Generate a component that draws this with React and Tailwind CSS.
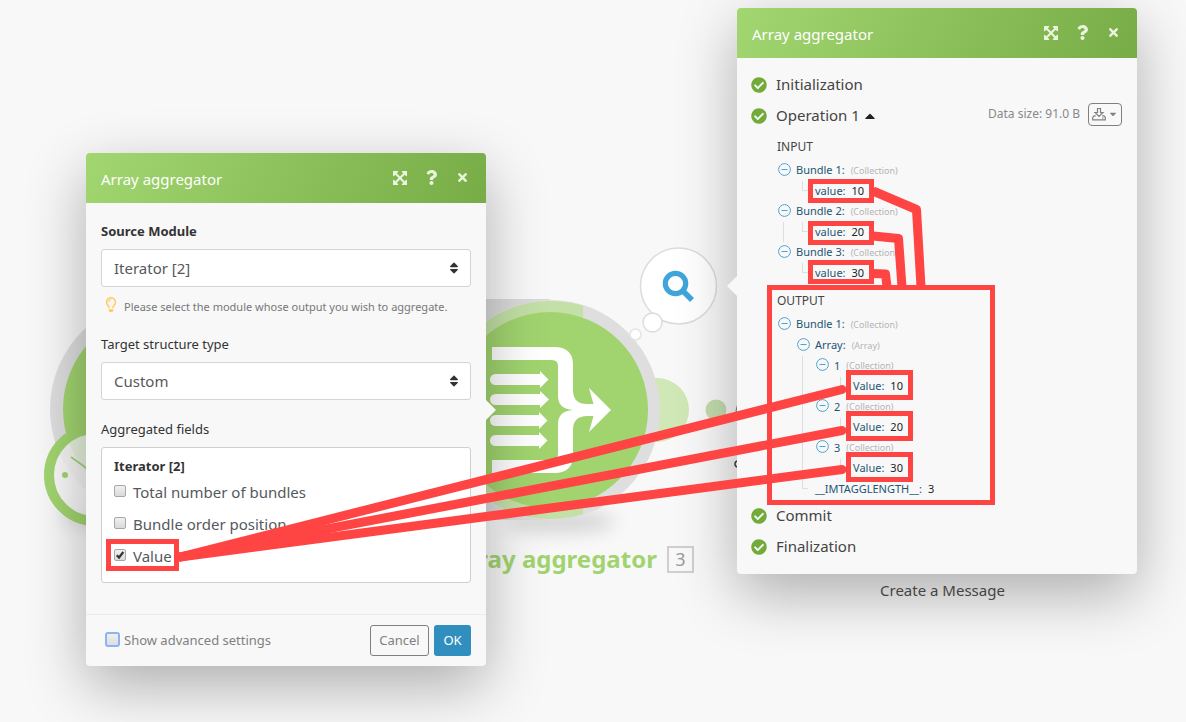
import React from "react";
import {
  FaQuestion,
  FaTimes,
  FaCheckCircle,
  FaRegLightbulb,
  FaSort,
  FaCaretUp,
  FaCaretDown,
} from "react-icons/fa";

function Canvas() {
  return (
    <svg className="absolute left-0 top-0 h-[722px] w-[1186px]" viewBox="0 0 1186 722" aria-hidden="true">
      <defs>
        <filter id="soft" x="-50%" y="-200%" width="200%" height="500%">
          <feGaussianBlur stdDeviation="9" />
        </filter>
        <clipPath id="ringLeft">
          <rect x="400" y="290" width="183" height="240" />
        </clipPath>
      </defs>

      {/* iterator module with its clock */}
      <circle cx="160" cy="409" r="110" fill="#dedede" />
      <circle cx="160" cy="409" r="97" fill="#a1d46f" />
      <ellipse cx="98" cy="518" rx="40" ry="8" fill="#000" opacity="0.12" filter="url(#soft)" />
      <circle cx="95" cy="475" r="46" fill="#f7f7f7" fillOpacity="0.8" stroke="#a1d46f" strokeWidth="10" />
      <circle cx="65" cy="475" r="3" fill="#a1d46f" />
      <path d="M71 457 L96 475" stroke="#a1d46f" strokeWidth="1.6" />

      {/* links to the next module */}
      <circle cx="657" cy="410" r="32" fill="#cfe8b6" />
      <circle cx="716" cy="410" r="10.5" fill="#c4dcae" />

      {/* aggregator module */}
      <ellipse cx="560" cy="522" rx="56" ry="11" fill="#000" opacity="0.14" filter="url(#soft)" />
      <rect x="440" y="299" width="110" height="221" fill="#dadada" />
      <circle cx="550" cy="410" r="110" fill="#dedede" />
      <circle cx="550" cy="410" r="109" fill="#c3e0a6" clipPath="url(#ringLeft)" />
      <circle cx="550" cy="410" r="98" fill="#a1d46f" />
      <path
        fill="#fff"
        d="M492 347H556Q573 348 573 365V390Q573 404 587 404H593.500L589 388L611 410L589 432L593.500 416H587Q573 416 573 430V455Q573 472 556 473H492V460H552Q558 460 558 454V424Q558 411 573 410Q558 409 558 396V366Q558 360 552 360H492Z"
      />
      <g fill="#fff">
        <path d="M495.500 374H540V371L548.500 379.500L540 388V385H495.500A5.500 5.500 0 0 1 495.500 374Z" />
        <path d="M495.500 394H540V391L549 399.500L540 408V405H495.500A5.500 5.500 0 0 1 495.500 394Z" />
        <path d="M495.500 415H539V412L547.500 420.500L539 429V426H495.500A5.500 5.500 0 0 1 495.500 415Z" />
        <path d="M495.500 435H539V432L547.500 440.500L539 449V446H495.500A5.500 5.500 0 0 1 495.500 435Z" />
      </g>

      {/* thought bubble */}
      <g fill="#fff" stroke="#dcdcdc" strokeWidth="1.5">
        <circle cx="678.500" cy="286" r="38" />
        <circle cx="652.500" cy="322.500" r="9.500" />
        <circle cx="635.500" cy="334.500" r="5.500" stroke="#e4e4e4" />
      </g>
      <circle cx="675.500" cy="283.500" r="10.200" fill="none" stroke="#3fa5db" strokeWidth="5.200" />
      <path d="M683 291 L692 300" stroke="#3fa5db" strokeWidth="5.500" />

      {/* edge of the module under the right window */}
      <circle cx="738" cy="464" r="3" fill="none" stroke="#444" strokeWidth="1.5" />
      <path d="M737.500 405 Q735 410 737 416" fill="none" stroke="#777" strokeWidth="1" />
    </svg>
  );
}

function ExpandIcon() {
  return (
    <svg viewBox="0 -128 1536 1536" className="h-3.5 w-3.5" fill="currentColor" aria-hidden="true">
      <path d="M1283 995l-355-355 355-355 144 144q29 31 70 14 39-17 39-59v-448q0-26-19-45t-45-19h-448q-42 0-59 40-17 39 14 69l144 144-355 355-355-355 144-144q31-30 14-69-17-40-59-40h-448q-26 0-45 19t-19 45v448q0 42 40 59 39 17 69-14l144-144 355 355-355 355-144-144q-19-19-45-19-12 0-24 5-40 17-40 59v448q0 26 19 45t45 19h448q42 0 59-40 17-39-14-69l-144-144 355-355 355 355-144 144q-31 30-14 69 17 40 59 40h448q26 0 45-19t19-45v-448q0-42-39-59-13-5-25-5-26 0-45 19z" />
    </svg>
  );
}

function WindowHeader({ title }) {
  const button = "flex h-6 w-5 items-center justify-center";
  return (
    <header className="flex h-[50px] items-center justify-between rounded-t bg-linear-115 from-[#a1d670] to-[#78ac46] pl-[15px] pr-3.5 text-white">
      <h2 className="pt-0.5 text-[15px] leading-5">{title}</h2>
      <div className="flex gap-[11px] pb-px text-[#eaf5df]">
        <button className={button} aria-label="Expand"><ExpandIcon /></button>
        <button className={button} aria-label="Help"><FaQuestion size={15} /></button>
        <button className={button} aria-label="Close"><FaTimes size={13} /></button>
      </div>
    </header>
  );
}

function SelectField({ id, label, value, bold, children }) {
  return (
    <div>
      <label htmlFor={id} className={"block text-[13px] leading-[18px] text-[#333] " + (bold ? "font-bold" : "")}>
        {label}
      </label>
      <div className="relative mt-[9px]">
        <select id={id} className="h-[38px] w-full appearance-none rounded-[3px] border border-[#d4d4d4] bg-white px-3 text-[15px] text-[#55595c]">
          <option>{value}</option>
        </select>
        <FaSort size={14} className="pointer-events-none absolute right-2.5 top-3 text-[#333]" />
      </div>
      {children}
    </div>
  );
}

function Check({ label, checked }) {
  return (
    <label className="flex h-8 items-center gap-[7px] text-[15px] text-[#55595c]">
      <span className="mb-0.5 grid h-3 w-3 shrink-0 place-items-center">
        <input
          type="checkbox"
          defaultChecked={checked}
          className="peer col-start-1 row-start-1 h-3 w-3 appearance-none rounded-[2px] border border-[#a8a8a8] bg-linear-to-b from-[#f0f0f0] to-[#dadada]"
        />
        <svg viewBox="0 0 12 12" className="pointer-events-none invisible col-start-1 row-start-1 h-3 w-3 peer-checked:visible" aria-hidden="true">
          <path d="M2.800 6.300 L5 8.500 L9.300 3" fill="none" stroke="#333" strokeWidth="2.200" />
        </svg>
      </span>
      {label}
    </label>
  );
}

function SettingsWindow() {
  return (
    <section className="absolute left-[86px] top-[153px] w-[400px] rounded bg-[#f8f8f8] shadow-[0_20px_60px_rgba(0,0,0,0.3)]">
      <WindowHeader title="Array aggregator" />
      <form className="px-[15px] pt-[19px]">
        <SelectField id="source" label="Source Module" value="Iterator [2]" bold>
          <p className="mt-2.5 flex h-5 items-center gap-[7px] pl-1 text-[11px] text-[#777]">
            <FaRegLightbulb size={15} className="mb-1.5 w-3 shrink-0 text-[#ffcb5c]" />
            Please select the module whose output you wish to aggregate.
          </p>
        </SelectField>
        <div className="mt-[18px]">
          <SelectField id="structure" label="Target structure type" value="Custom" />
        </div>
        <fieldset className="mt-5">
          <legend className="text-[13px] leading-[18px] text-[#333]">Aggregated fields</legend>
          <div className="mt-[9px] rounded-[3px] border border-[#d0d0d0] bg-white px-3 pb-2.5 pt-2">
            <p className="text-[13px] font-bold leading-5 text-[#333]">Iterator [2]</p>
            <Check label="Total number of bundles" />
            <Check label="Bundle order position" />
            <Check label="Value" checked />
          </div>
        </fieldset>
      </form>
      <footer className="mt-[31px] flex h-[52px] items-center justify-between border-t border-[#ebebeb] px-[15px]">
        <label className="flex items-center gap-1 pl-1 text-[13px] text-[#808080]">
          <input type="checkbox" className="mb-0.5 h-[15px] w-[15px] appearance-none rounded-[3px] border-2 border-[#8eb4f0] bg-linear-to-b from-[#f0f0f0] to-[#dcdcdc]" />
          Show advanced settings
        </label>
        <div className="flex gap-[5px] text-[13px]">
          <button className="h-[31px] w-[59px] rounded-[3px] border border-[#808080] text-[#808080]">Cancel</button>
          <button className="h-[31px] w-[37px] rounded-[3px] bg-[#318fbf] text-white">OK</button>
        </div>
      </footer>
      <svg className="absolute left-full top-[247px] h-5 w-2.5" viewBox="0 0 10 20" aria-hidden="true">
        <path d="M0 0 L10 10 L0 20Z" fill="#f8f8f8" />
      </svg>
    </section>
  );
}

function Step({ label, children }) {
  return (
    <div className="flex h-[31px] items-center">
      <FaCheckCircle size={16} className="mr-[9px] shrink-0 text-[#73ab3a]" />
      <span className="text-[15px] text-[#444]">{label}</span>
      {children}
    </div>
  );
}

function Branch({ name, type, children, tall = true }) {
  return (
    <li>
      <div className={"flex items-center text-[11px] " + (tall ? "h-[21px]" : "h-5")}>
        <button className="mb-[3px] h-[13px] w-[19px] shrink-0" aria-label="Collapse">
          <svg viewBox="0 0 13 13" className="ml-px h-[13px] w-[13px]" fill="none" stroke="#4fa3cf">
            <circle cx="6.500" cy="6.500" r="5.900" />
            <path d="M3.500 6.500 H9.500" />
          </svg>
        </button>
        <span className="text-[#1d5673]">{name}</span>
        <span className="ml-1.5 text-[9px] text-[#b4b4b4]">{type}</span>
      </div>
      <ul className="pl-[19px]">{children}</ul>
    </li>
  );
}

function Leaf({ name, value, tall }) {
  return (
    <li className={"flex items-center text-[11px] " + (tall ? "h-[21px]" : "h-5")}>
      <span className="mb-2.5 ml-1.5 mr-[7px] h-2.5 w-1.5 shrink-0 border-b border-l border-[#dedede]" />
      <span className="text-[#1d5673]">{name}:</span>
      <span className="ml-1.5 text-[#222]">{value}</span>
    </li>
  );
}

function InspectorWindow() {
  return (
    <section className="absolute left-[737px] top-2 w-[400px] rounded bg-[#f8f8f8] shadow-[0_20px_60px_rgba(0,0,0,0.3)]">
      <WindowHeader title="Array aggregator" />
      <div className="px-3.5 pb-3 pt-[11px]">
        <Step label="Initialization" />
        <Step label="Operation 1">
          <FaCaretUp size={16} className="ml-0.5 text-[#222]" />
          <div className="mb-[3px] ml-auto mr-px flex items-center gap-2">
            <span className="text-[12px] text-[#888]">Data size: 91.0 B</span>
            <button className="flex h-[23px] w-[34px] items-center justify-center gap-0.5 rounded border border-[#808080] text-[#808080]" aria-label="Download">
              <svg viewBox="0 0 14 14" className="h-3.5 w-3.5" fill="none" stroke="currentColor" strokeWidth="1.200">
                <path d="M5.500 1.500H8.500V5.500H11L7 9.500L3 5.500H5.500Z" />
                <path d="M3.800 8.800H2L0.700 10.500V12.800H13.300V10.500L12 8.800H10.200M10 11H11.500" />
              </svg>
              <FaCaretDown size={10} />
            </button>
          </div>
        </Step>
        <div className="pl-[26px]">
          <h3 className="flex h-[29px] items-end pb-1 text-[12px] text-[#444]">INPUT</h3>
          <ul className="relative before:absolute before:left-1.5 before:top-[62px] before:h-5 before:border-l before:border-[#dedede]">
            <Branch name="Bundle 1:" type="(Collection)"><Leaf name="value" value="10" /></Branch>
            <Branch name="Bundle 2:" type="(Collection)"><Leaf name="value" value="20" /></Branch>
            <Branch name="Bundle 3:" type="(Collection)"><Leaf name="value" value="30" /></Branch>
          </ul>
          <h3 className="flex h-[31px] items-end pb-1 text-[12px] text-[#444]">OUTPUT</h3>
          <ul className="relative before:absolute before:left-[25px] before:top-[42px] before:h-[124px] before:border-l before:border-[#dedede]">
            <Branch name="Bundle 1:" type="(Collection)">
              <Branch name="Array:" type="(Array)">
                <Branch name="1" type="(Collection)" tall={false}><Leaf name="Value" value="10" tall /></Branch>
                <Branch name="2" type="(Collection)" tall={false}><Leaf name="Value" value="20" tall /></Branch>
                <Branch name="3" type="(Collection)" tall={false}><Leaf name="Value" value="30" tall /></Branch>
              </Branch>
              <Leaf name="__IMTAGGLENGTH__" value="3" />
            </Branch>
          </ul>
        </div>
        <div className="pt-px">
          <Step label="Commit" />
          <Step label="Finalization" />
        </div>
      </div>
      <svg className="absolute right-full top-[268px] h-5 w-2.5" viewBox="0 0 10 20" aria-hidden="true">
        <path d="M10 0 L0 10 L10 20Z" fill="#f8f8f8" />
      </svg>
    </section>
  );
}

function Annotations() {
  return (
    <svg className="pointer-events-none absolute left-0 top-0 h-[722px] w-[1186px]" viewBox="0 0 1186 722" fill="none" stroke="#ff4444" aria-hidden="true">
      <g strokeWidth="5">
        <rect x="108.500" y="541.500" width="68" height="27" />
        <rect x="810.500" y="181.500" width="61" height="19" />
        <rect x="810.500" y="223.500" width="61" height="19" />
        <rect x="810.500" y="262.500" width="61" height="19" />
        <rect x="769.500" y="287.500" width="223" height="215" />
        <rect x="848.500" y="372.500" width="62" height="25" />
        <rect x="848.500" y="413.500" width="62" height="25" />
        <rect x="848.500" y="454.500" width="62" height="25" />
      </g>
      <g strokeWidth="9" strokeLinejoin="round">
        <path d="M873 191 L916.500 209.500 L921 287" />
        <path d="M873 236 L898.500 238.500 L902 287" />
        <path d="M873 273.500 L885.500 274 L887 287" />
      </g>
      <g strokeWidth="9" strokeLinecap="round">
        <path d="M180 557 L842 389.500" />
        <path d="M180 557 L842 430.500" />
        <path d="M180 557 L842 469.500" />
      </g>
    </svg>
  );
}

export default function App() {
  return (
    <main className="relative min-h-screen overflow-hidden bg-[#f8f8f8] font-['Noto_Sans',sans-serif]">
      <Canvas />
      <div className="absolute left-[450px] top-[543px] flex items-center gap-2.5">
        <span className="text-[24px] font-bold leading-8 text-[#a1d46f]">Array aggregator</span>
        <span className="flex h-[27px] w-[27px] items-center justify-center border-2 border-[#cfcfcf] text-[18px] text-[#999]">3</span>
      </div>
      <SettingsWindow />
      <InspectorWindow />
      <p className="absolute left-[880px] top-[578px] text-[15px] leading-6 text-[#444]">Create a Message</p>
      <Annotations />
    </main>
  );
}
